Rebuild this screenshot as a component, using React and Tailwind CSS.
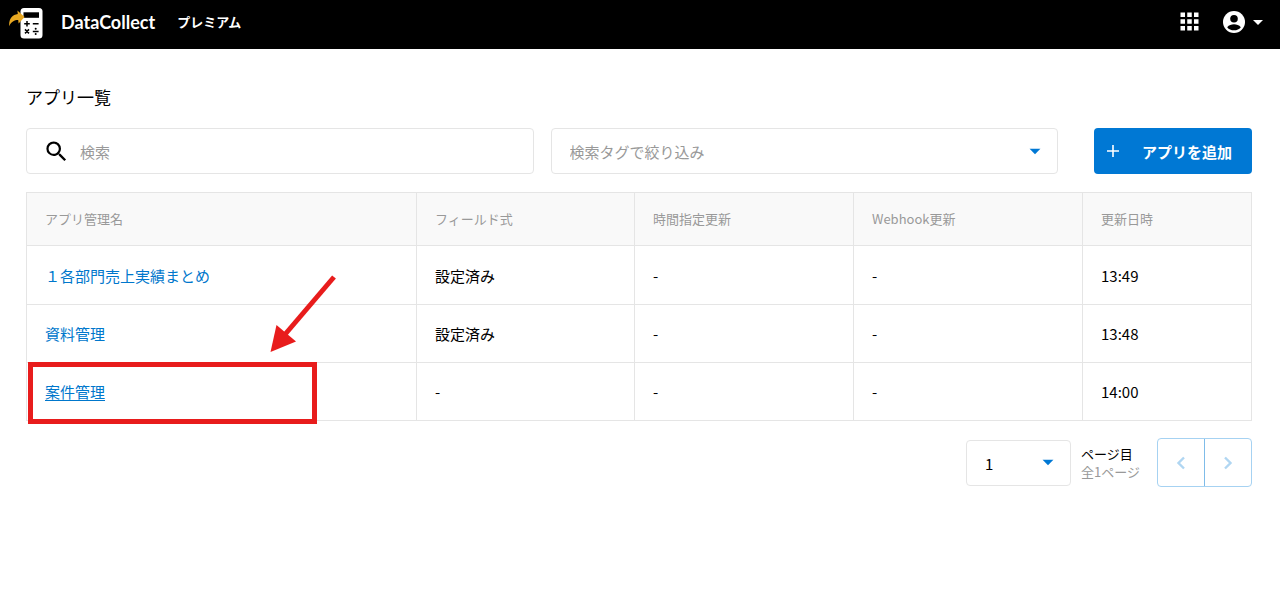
import { useState } from "react"
import { MdApps, MdArrowDropDown, MdSearch } from "react-icons/md"

const apps = [
  { name: "１各部門売上実績まとめ", field: "設定済み", schedule: "-", webhook: "-", updated: "13:49" },
  { name: "資料管理", field: "設定済み", schedule: "-", webhook: "-", updated: "13:48" },
  { name: "案件管理", field: "-", schedule: "-", webhook: "-", updated: "14:00", marked: true },
]

function Logo() {
  return (
    <svg viewBox="0 0 34 32" className="h-8 w-[34px]" aria-hidden="true">
      <rect x="11.5" y="1" width="22" height="30.5" rx="3.5" fill="#fff" />
      <rect x="14.5" y="5.3" width="15.5" height="5.5" fill="#000" />
      <path
        d="M0.2 19.3 C-0.4 12.3 3.2 7.9 8.8 7.1 L8.4 3.5 L15.6 10.1 L9.6 16.5 L9.2 13.1 C5.3 13.1 2.3 14.7 0.2 19.3 Z"
        fill="#e8a822"
      />
      <path
        d="M15.2 16.8h5.6M18 14v5.6M23.8 16.8h5.8M16 22.4l4 4M20 22.4l-4 4M23.8 24.4h5.8"
        stroke="#000"
        strokeWidth="1.5"
      />
      <circle cx="26.7" cy="21.8" r="1" fill="#000" />
      <circle cx="26.7" cy="27" r="1" fill="#000" />
    </svg>
  )
}

function AccountIcon() {
  return (
    <svg viewBox="0 0 22 22" className="size-[22px]" aria-hidden="true">
      <circle cx="11" cy="11" r="11" fill="#fff" />
      <circle cx="11" cy="7.8" r="3.8" fill="#000" />
      <path d="M4.2 16.2 C5.8 14 8.6 13.3 11 13.3 C13.4 13.3 16.2 14 17.8 16.2 C16.2 18.4 13.8 19.3 11 19.3 C8.2 19.3 5.8 18.4 4.2 16.2 Z" fill="#000" />
    </svg>
  )
}

function Chevron({ d }) {
  return (
    <svg viewBox="0 0 10 14" className="h-[14px] w-[10px]" fill="none" aria-hidden="true">
      <path d={d} stroke="currentColor" strokeWidth="2.4" />
    </svg>
  )
}

function Header() {
  return (
    <header className="flex h-[49px] items-center bg-black pb-1 pl-[9px] pr-[10px] text-white">
      <Logo />
      <a href="#" className="ml-[18px] pb-0.5 font-[Lato,sans-serif] text-lg font-bold">DataCollect</a>
      <span className="ml-[22px] pb-0.5 text-[13px] font-bold">プレミアム</span>
      <div className="ml-auto flex items-center gap-5 pb-0.5">
        <button type="button" aria-label="アプリメニュー">
          <MdApps className="size-[27px]" />
        </button>
        <button type="button" aria-label="アカウント" className="flex items-center gap-px">
          <AccountIcon />
          <MdArrowDropDown className="size-6" />
        </button>
      </div>
    </header>
  )
}

function AppRow({ app }) {
  return (
    <tr className="h-[58px] first:h-[59px] *:border *:border-[#e5e5e5] *:px-[18px] *:pt-0.5">
      <td className="relative">
        <a href="#" className={app.marked ? "text-[#0077cc] underline underline-offset-2" : "text-[#0077cc]"}>
          {app.name}
        </a>
        {app.marked && (
          <>
            <div className="pointer-events-none absolute -bottom-1 -top-px left-px w-[289px] border-[5px] border-[#e81c1c]" />
            <svg
              viewBox="0 0 66 78"
              className="pointer-events-none absolute -top-[88px] left-[243px] h-[78px] w-[66px]"
              aria-hidden="true"
            >
              <path d="M64 2 L14.5 60" stroke="#e81c1c" strokeWidth="5" />
              <path d="M0.5 77 L6.5 50 L26 66.5 Z" fill="#e81c1c" />
            </svg>
          </>
        )}
      </td>
      <td>{app.field}</td>
      <td>{app.schedule}</td>
      <td>{app.webhook}</td>
      <td>{app.updated}</td>
    </tr>
  )
}

export default function App() {
  const [keyword, setKeyword] = useState("")
  const [tag, setTag] = useState("")

  return (
    <div className="min-h-screen bg-white font-['Noto_Sans_CJK_JP',sans-serif] text-[15px] text-black">
      <Header />

      <main className="pl-[26px] pr-7 pt-9">
        <h1 className="text-[17px] leading-6">アプリ一覧</h1>

        <div className="mt-[19px] flex items-center">
          <div className="grid flex-1 grid-cols-2 gap-[17px]">
            <label className="flex h-[46px] items-center rounded border border-[#e5e5e5] pl-4">
              <MdSearch className="size-[27px] shrink-0" />
              <input
                type="text"
                aria-label="検索"
                placeholder="検索"
                value={keyword}
                onChange={(e) => setKeyword(e.target.value)}
                className="ml-[10px] min-w-0 flex-1 pt-0.5 outline-none placeholder:text-[#999]"
              />
            </label>
            <div className="relative">
              <select
                aria-label="検索タグで絞り込み"
                value={tag}
                onChange={(e) => setTag(e.target.value)}
                className="h-[46px] w-full appearance-none rounded border border-[#e5e5e5] bg-white pl-[18px] pt-0.5 text-[#999]"
              >
                <option value="">検索タグで絞り込み</option>
              </select>
              <MdArrowDropDown className="pointer-events-none absolute right-[10px] top-[10px] size-[26px] text-[#0078d4]" />
            </div>
          </div>
          <button
            type="button"
            className="ml-9 flex h-[46px] w-[158px] items-center justify-between rounded bg-[#0078d4] pl-[13px] pr-5 font-bold text-white"
          >
            <svg viewBox="0 0 12 12" className="size-3" aria-hidden="true">
              <path d="M6 0v12M0 6h12" stroke="currentColor" strokeWidth="1.6" />
            </svg>
            <span className="pt-0.5">アプリを追加</span>
          </button>
        </div>

        <table className="mt-[18px] w-full table-fixed border-collapse text-left">
          <thead>
            <tr className="h-[53px] bg-[#f9f9f9] text-[13px] text-[#999] *:border *:border-[#e5e5e5] *:px-[18px] *:font-normal">
              <th>アプリ管理名</th>
              <th className="w-[218px]">フィールド式</th>
              <th className="w-[219px]">時間指定更新</th>
              <th className="w-[229px]">Webhook更新</th>
              <th className="w-[169px]">更新日時</th>
            </tr>
          </thead>
          <tbody>
            {apps.map((app) => (
              <AppRow key={app.name} app={app} />
            ))}
          </tbody>
        </table>

        <div className="mt-[17px] flex items-center justify-end">
          <div className="relative">
            <select
              aria-label="ページ"
              className="h-[46px] w-[105px] appearance-none rounded border border-[#e5e5e5] bg-white pl-[18px] pt-1"
            >
              <option>1</option>
            </select>
            <MdArrowDropDown className="pointer-events-none absolute right-[10px] top-[9px] size-[26px] text-[#0078d4]" />
          </div>
          <div className="ml-[10px] text-[13px] leading-[18px]">
            <p>ページ目</p>
            <p className="text-[#999]">全1ページ</p>
          </div>
          <div className="ml-[17px] flex h-[49px] rounded border border-[#a6d2f2] text-[#b0d6f2]">
            <button type="button" aria-label="前のページ" className="flex w-[46px] items-center justify-center">
              <Chevron d="M8 1.5 L2.5 7 L8 12.5" />
            </button>
            <button
              type="button"
              aria-label="次のページ"
              className="flex w-[47px] items-center justify-center border-l border-[#7fbce9]"
            >
              <Chevron d="M2 1.5 L7.5 7 L2 12.5" />
            </button>
          </div>
        </div>
      </main>
    </div>
  )
}
